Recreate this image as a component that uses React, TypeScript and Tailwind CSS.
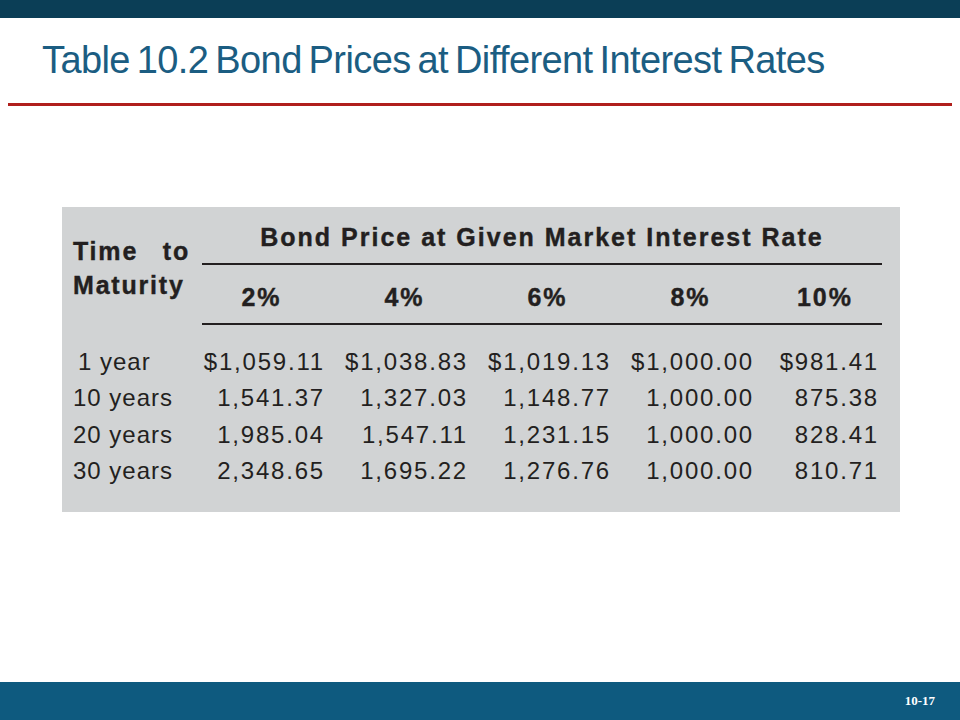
import React from 'react'

const rows = [
  { label: '1 year', indent: true, values: ['$1,059.11', '$1,038.83', '$1,019.13', '$1,000.00', '$981.41'] },
  { label: '10 years', values: ['1,541.37', '1,327.03', '1,148.77', '1,000.00', '875.38'] },
  { label: '20 years', values: ['1,985.04', '1,547.11', '1,231.15', '1,000.00', '828.41'] },
  { label: '30 years', values: ['2,348.65', '1,695.22', '1,276.76', '1,000.00', '810.71'] },
]

export default function App() {
  return (
    <div className="w-[960px] h-[720px] bg-white flex flex-col font-['Liberation_Sans',Arial,sans-serif]">
      {/* top bar */}
      <div className="h-[18px] bg-[#0b3e56]" />

      {/* title */}
      <div className="pl-[42px] pt-[20px] h-[85px]">
        <h1 className="text-[38px] leading-[44px] text-[#1b5d82] tracking-[-0.6px] [word-spacing:-3px] whitespace-nowrap">
          Table 10.2 Bond Prices at Different Interest Rates
        </h1>
      </div>
      <div className="mx-[8px] h-[3px] bg-[#b01f1c]" />

      {/* table */}
      <div className="flex-1">
        <div className="ml-[62px] mt-[101px] w-[838px] h-[305px] bg-[#d1d3d4] pl-[11px] pt-[16px] text-[#231f20]">
          <div className="grid grid-cols-[127px_123px_143px_143px_143px_130px] [-webkit-text-stroke:0.4px_#231f20]">
            {/* left heading */}
            <div className="row-span-4 pt-[11px] text-[25px] font-bold leading-[34px] tracking-[1.8px]">
              <div className="flex justify-between w-[117px]">
                <span>Time</span>
                <span>to</span>
              </div>
              <div>Maturity</div>
            </div>

            <div className="col-span-5 ml-[2px] text-center text-[25px] font-bold leading-[28px] tracking-[2px]">
              Bond Price at Given Market Interest Rate
            </div>
            <div className="col-span-5 ml-[2px] mt-[12px] h-[2px] bg-[#231f20]" />
            <div className="col-span-5 grid grid-cols-[123px_143px_143px_143px_130px] mt-[18px] text-[25px] font-bold leading-[28px] tracking-[2px]">
              <div className="text-center">2%</div>
              <div className="flex justify-end"><span className="w-[123px] text-center">4%</span></div>
              <div className="flex justify-end"><span className="w-[123px] text-center">6%</span></div>
              <div className="flex justify-end"><span className="w-[123px] text-center">8%</span></div>
              <div className="flex justify-end"><span className="w-[98px] mr-[8px] text-center">10%</span></div>
            </div>
            <div className="col-span-5 ml-[2px] mt-[12px] h-[2px] bg-[#231f20]" />
          </div>

          {/* data rows */}
          <div className="mt-[19px] text-[24px] leading-[36.4px]">
            {rows.map((row) => (
              <div key={row.label} className="grid grid-cols-[127px_123px_143px_143px_143px_125px]">
                <div className={`tracking-[1px] ${row.indent ? 'pl-[5px]' : ''}`}>{row.label}</div>
                {row.values.map((v, i) => (
                  <div key={i} className="text-right">
                    <span className="tracking-[1.8px] mr-[-2px]">{v}</span>
                  </div>
                ))}
              </div>
            ))}
          </div>
        </div>
      </div>

      {/* bottom bar */}
      <div className="h-[38px] bg-[#0e5a7f] flex items-center justify-end pr-[25px]">
        <span className="text-white text-[13px] font-bold font-['Liberation_Serif','Times_New_Roman',serif]">10-17</span>
      </div>
    </div>
  )
}
